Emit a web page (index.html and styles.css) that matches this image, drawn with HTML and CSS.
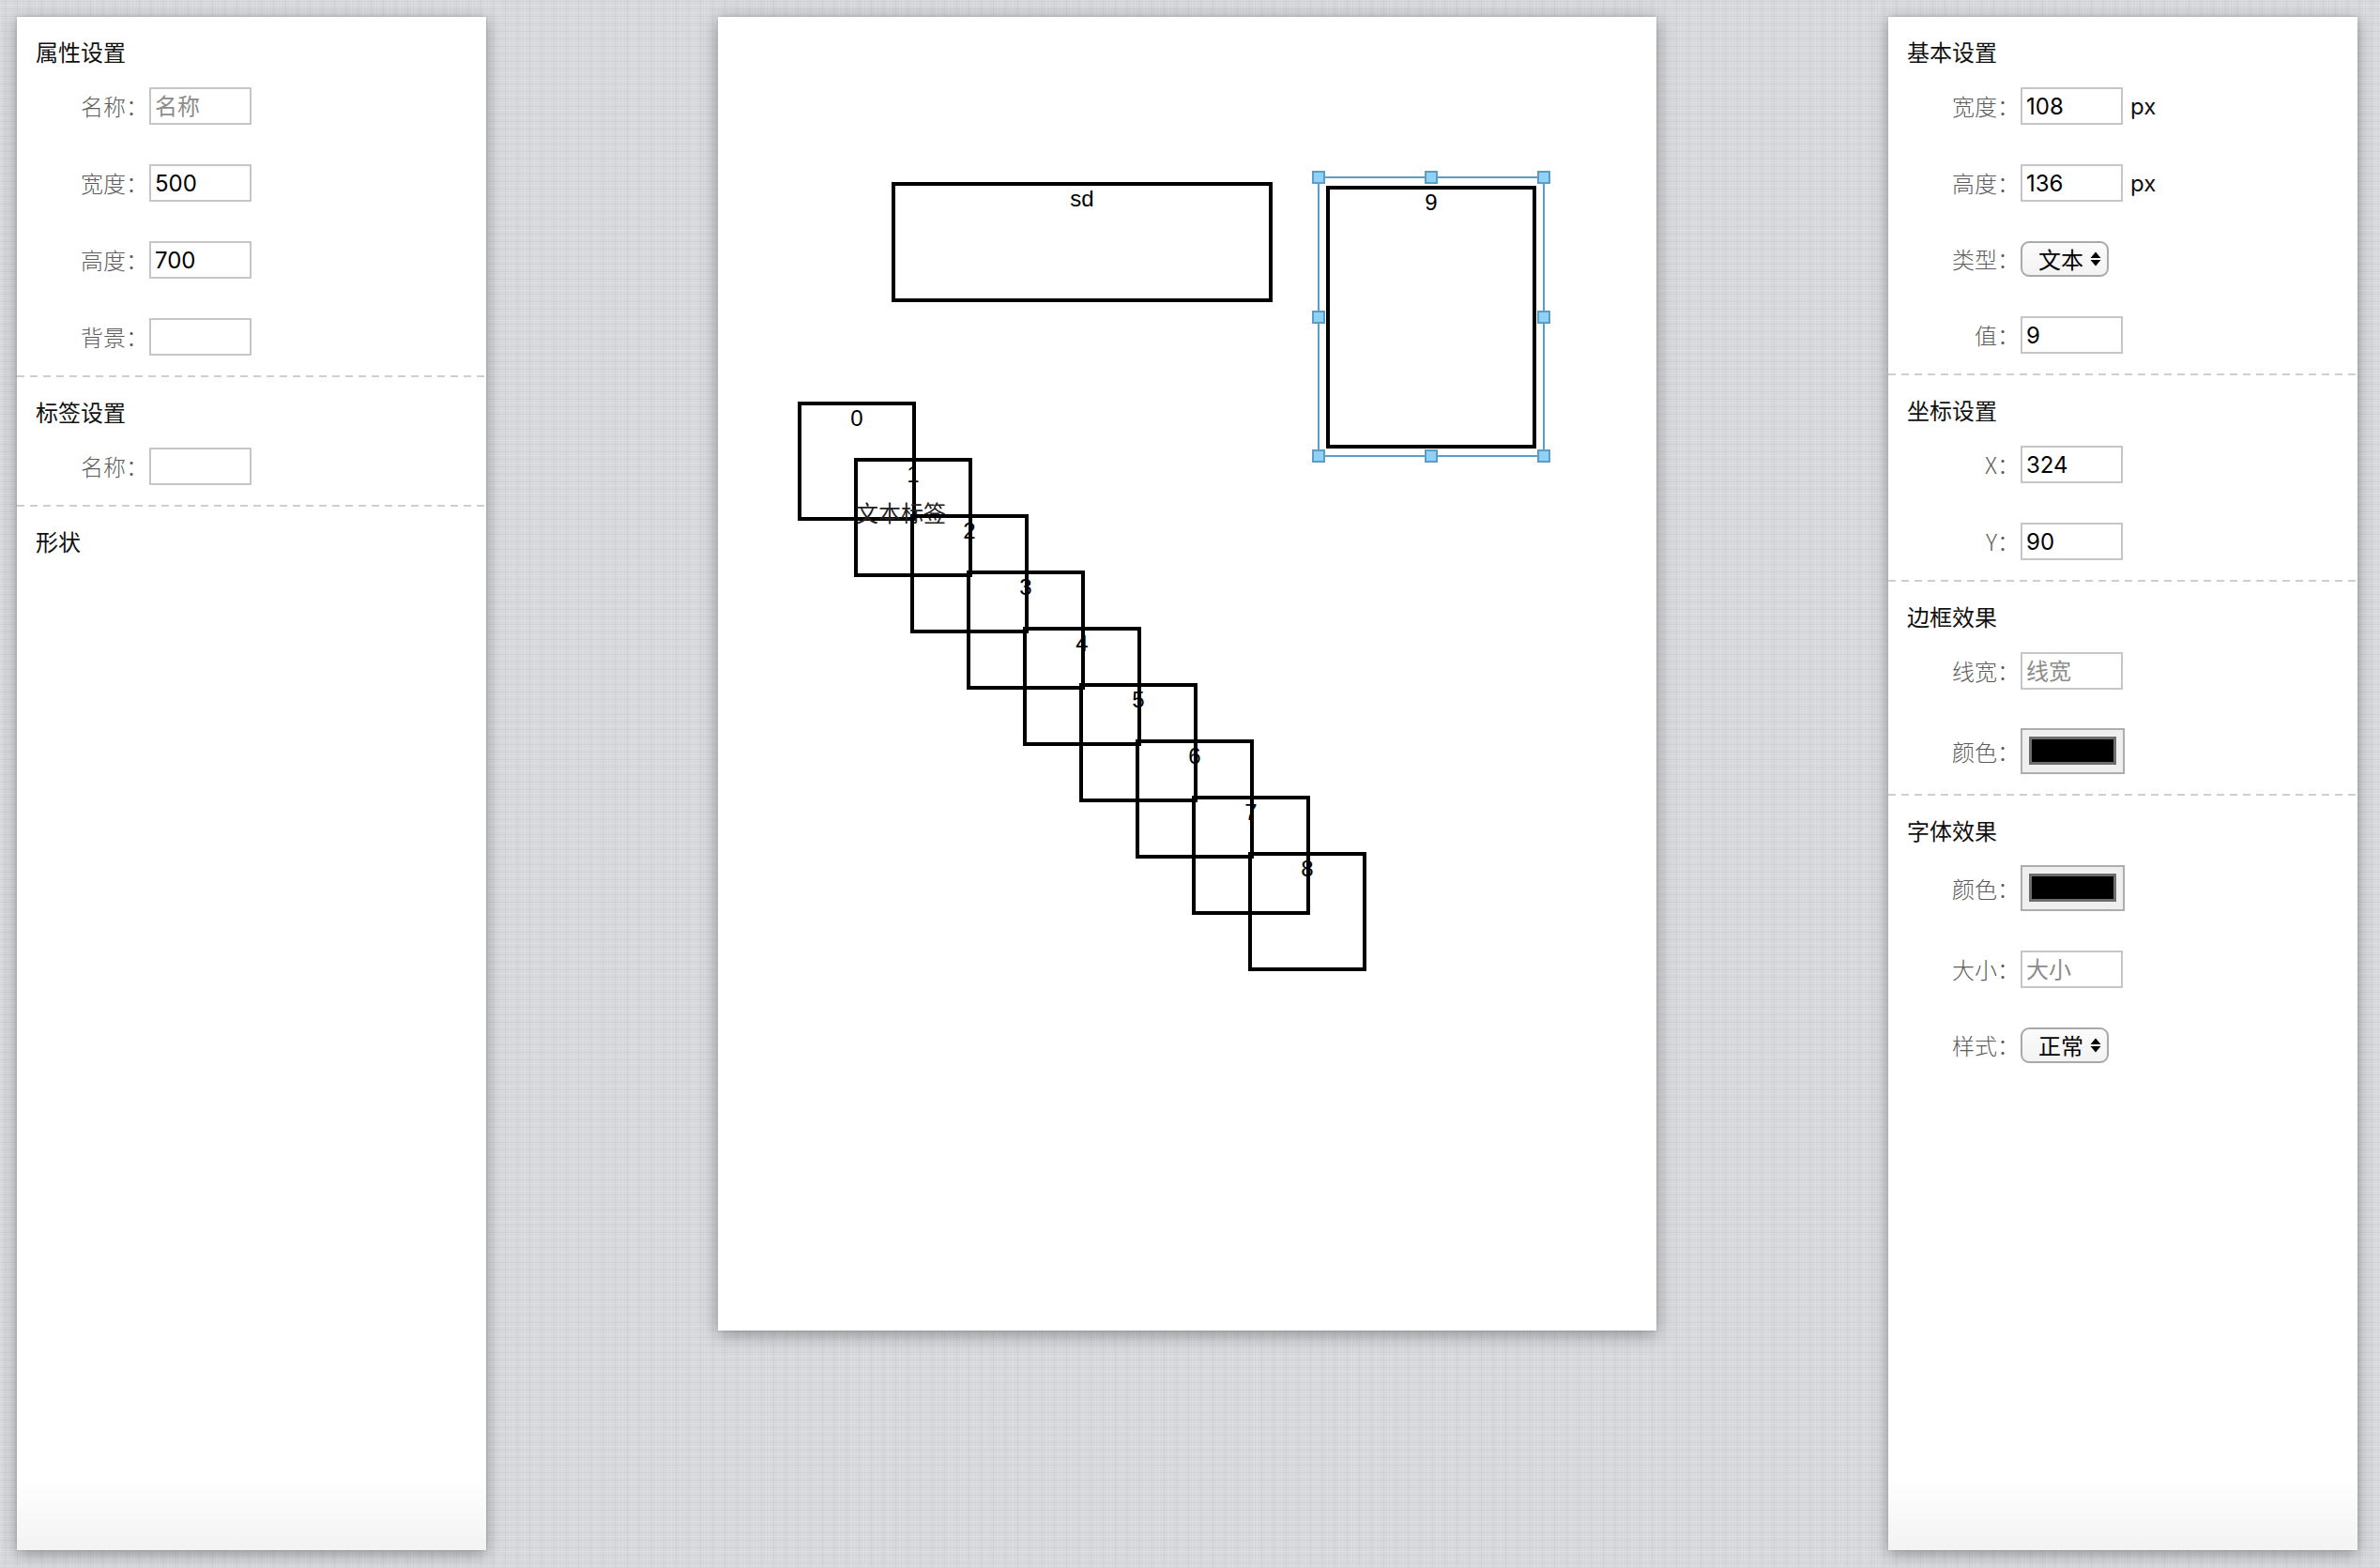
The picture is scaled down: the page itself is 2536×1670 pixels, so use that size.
FILE: index.html
```html
<!DOCTYPE html>
<html lang="zh-CN">
<head>
<meta charset="utf-8">
<title>画布编辑器</title>
<link rel="stylesheet" href="styles.css">
</head>
<body>
<aside class="panel">
  <section class="section">
    <h3 class="section-title">属性设置</h3>
    <div class="rows">
      <div class="row"><label class="label">名称：</label><input class="field" placeholder="名称"></div>
      <div class="row"><label class="label">宽度：</label><input class="field" value="500"></div>
      <div class="row"><label class="label">高度：</label><input class="field" value="700"></div>
      <div class="row"><label class="label">背景：</label><input class="field"></div>
    </div>
  </section>
  <section class="section">
    <h3 class="section-title">标签设置</h3>
    <div class="rows">
      <div class="row"><label class="label">名称：</label><input class="field"></div>
    </div>
  </section>
  <section class="section">
    <h3 class="section-title">形状</h3>
  </section>
</aside>

<main class="canvas">
  <div class="shape" style="left:185px;top:176px;width:406px;height:128px">sd</div>
  <div class="shape" style="left:85px;top:410px;width:126px;height:127px">0</div>
  <div class="shape" style="left:145px;top:470px;width:126px;height:127px">1</div>
  <div class="canvas-label" style="left:147px;top:511px">文本标签</div>
  <div class="shape" style="left:205px;top:530px;width:126px;height:127px">2</div>
  <div class="shape" style="left:265px;top:590px;width:126px;height:127px">3</div>
  <div class="shape" style="left:325px;top:650px;width:126px;height:127px">4</div>
  <div class="shape" style="left:385px;top:710px;width:126px;height:127px">5</div>
  <div class="shape" style="left:445px;top:770px;width:126px;height:127px">6</div>
  <div class="shape" style="left:505px;top:830px;width:126px;height:127px">7</div>
  <div class="shape" style="left:565px;top:890px;width:126px;height:127px">8</div>
  <div class="shape" style="left:648px;top:180px;width:224px;height:280px">9</div>
  <div class="selection" style="left:639px;top:170px;width:242px;height:299px">
    <span class="handle h-tl"></span>
    <span class="handle h-tm"></span>
    <span class="handle h-tr"></span>
    <span class="handle h-ml"></span>
    <span class="handle h-mr"></span>
    <span class="handle h-bl"></span>
    <span class="handle h-bm"></span>
    <span class="handle h-br"></span>
  </div>
</main>

<aside class="panel">
  <section class="section">
    <h3 class="section-title">基本设置</h3>
    <div class="rows">
      <div class="row"><label class="label">宽度：</label><input class="field" value="108"><span class="unit">px</span></div>
      <div class="row"><label class="label">高度：</label><input class="field" value="136"><span class="unit">px</span></div>
      <div class="row"><label class="label">类型：</label>
        <div class="select"><span>文本</span>
          <svg class="arrows" width="12" height="16" viewBox="0 0 12 16"><path d="M0.5 7 L6 0.5 L11.5 7 Z M0.5 9 L11.5 9 L6 15.5 Z" fill="#000"/></svg>
        </div>
      </div>
      <div class="row"><label class="label">值：</label><input class="field" value="9"></div>
    </div>
  </section>
  <section class="section">
    <h3 class="section-title">坐标设置</h3>
    <div class="rows">
      <div class="row"><label class="label">X：</label><input class="field" value="324"></div>
      <div class="row"><label class="label">Y：</label><input class="field" value="90"></div>
    </div>
  </section>
  <section class="section">
    <h3 class="section-title">边框效果</h3>
    <div class="rows">
      <div class="row"><label class="label">线宽：</label><input class="field" placeholder="线宽"></div>
      <div class="row color-row"><label class="label">颜色：</label><div class="color"><span class="swatch"></span></div></div>
    </div>
  </section>
  <section class="section">
    <h3 class="section-title">字体效果</h3>
    <div class="rows">
      <div class="row color-row"><label class="label">颜色：</label><div class="color"><span class="swatch"></span></div></div>
      <div class="row"><label class="label">大小：</label><input class="field" placeholder="大小"></div>
      <div class="row"><label class="label">样式：</label>
        <div class="select"><span>正常</span>
          <svg class="arrows" width="12" height="16" viewBox="0 0 12 16"><path d="M0.5 7 L6 0.5 L11.5 7 Z M0.5 9 L11.5 9 L6 15.5 Z" fill="#000"/></svg>
        </div>
      </div>
    </div>
  </section>
</aside>
</body>
</html>
```

FILE: styles.css
```css
html, body {
  margin: 0;
}

body {
  height: 100vh;
  box-sizing: border-box;
  padding: 18px 24px 18px 18px;
  display: flex;
  justify-content: space-between;
  align-items: flex-start;
  overflow: hidden;
  font-family: "Noto Sans CJK SC", sans-serif;
  background-color: #d7d8dc;
  background-image:
    repeating-linear-gradient(90deg, rgba(255,255,255,0.12) 0 1px, transparent 1px 5px, rgba(0,0,0,0.03) 5px 6px, transparent 6px 9px, rgba(255,255,255,0.08) 9px 11px, transparent 11px 13px),
    repeating-linear-gradient(0deg, rgba(255,255,255,0.10) 0 1px, transparent 1px 4px, rgba(0,0,0,0.025) 4px 5px, transparent 5px 8px);
}

.panel {
  width: 500px;
  height: 1634px;
  flex-shrink: 0;
  background: linear-gradient(to bottom, #fff 0, #fff calc(100% - 80px), #f3f3f3 100%);
  box-shadow: 0 4px 16px rgba(0, 0, 0, 0.33), 0 0 3px rgba(0, 0, 0, 0.12);
}

.section {
  padding: 20px 20px 21px;
}

.section + .section {
  padding-top: 22px;
  background: repeating-linear-gradient(90deg, #cfcfcf 0 8px, transparent 8px 14px) top left / 100% 2px no-repeat;
}

.section-title {
  margin: 0 0 21px;
  font-size: 24px;
  line-height: 34px;
  font-weight: 400;
  color: #111;
}

.rows {
  display: flex;
  flex-direction: column;
  gap: 42px;
}

.row {
  display: flex;
  align-items: center;
}

.label {
  width: 120px;
  margin-right: 1px;
  flex-shrink: 0;
  text-align: right;
  font-size: 24px;
  line-height: 34px;
  font-weight: 300;
  color: #5c5c5c;
}

.field {
  width: 109px;
  height: 40px;
  box-sizing: border-box;
  margin: 0;
  padding: 0 4px;
  border: 2px solid #c6c6c6;
  border-radius: 0;
  background: #fff;
  outline: none;
  font-family: Inter, "Noto Sans CJK SC", sans-serif;
  font-size: 24px;
  color: #000;
}

.field::placeholder {
  color: #8c8c8c;
  font-family: "Noto Sans CJK SC", sans-serif;
}

.unit {
  margin-left: 8px;
  font-family: Inter, sans-serif;
  font-size: 24px;
  color: #111;
}

.select {
  width: 94px;
  height: 38px;
  box-sizing: border-box;
  border: 2px solid #a9a9a9;
  border-radius: 9px;
  background: linear-gradient(#fbfbfb, #f3f3f3);
  display: flex;
  align-items: center;
  justify-content: space-between;
  padding: 0 6px 0 17px;
  font-size: 24px;
  line-height: 34px;
  color: #000;
}

.arrows {
  display: block;
}

.color-row .color {
  margin-top: -1px;
}

.color {
  width: 111px;
  height: 49px;
  box-sizing: border-box;
  border: 2px solid #adadad;
  background: #efefef;
  padding: 7px 7px 0;
}

.swatch {
  display: block;
  height: 30px;
  box-sizing: border-box;
  border: 3px solid #6d6d6d;
  background: #000;
}

.canvas {
  position: relative;
  width: 1000px;
  height: 1400px;
  flex-shrink: 0;
  background: #fff;
  box-shadow: 0 4px 18px rgba(0, 0, 0, 0.35), 0 0 3px rgba(0, 0, 0, 0.12);
}

.shape {
  position: absolute;
  box-sizing: border-box;
  border: 4px solid #000;
  text-align: center;
  font-family: "Liberation Sans", sans-serif;
  font-size: 24px;
  line-height: 27px;
  color: #000;
}

.canvas-label {
  position: absolute;
  font-family: "Noto Sans CJK SC", sans-serif;
  font-size: 24px;
  line-height: 34px;
  color: #222;
  white-space: nowrap;
}

.selection {
  position: absolute;
  box-sizing: border-box;
  border: 2px solid #5d9cc4;
}

.handle {
  position: absolute;
  width: 14px;
  height: 14px;
  box-sizing: border-box;
  border: 2px solid #5d9cc4;
  background: #8fd2f6;
}

.h-tl { left: -8px; top: -8px; }
.h-tm { left: calc(50% - 7px); top: -8px; }
.h-tr { left: calc(100% - 6px); top: -8px; }
.h-ml { left: -8px; top: calc(50% - 7px); }
.h-mr { left: calc(100% - 6px); top: calc(50% - 7px); }
.h-bl { left: -8px; top: calc(100% - 6px); }
.h-bm { left: calc(50% - 7px); top: calc(100% - 6px); }
.h-br { left: calc(100% - 6px); top: calc(100% - 6px); }
```
